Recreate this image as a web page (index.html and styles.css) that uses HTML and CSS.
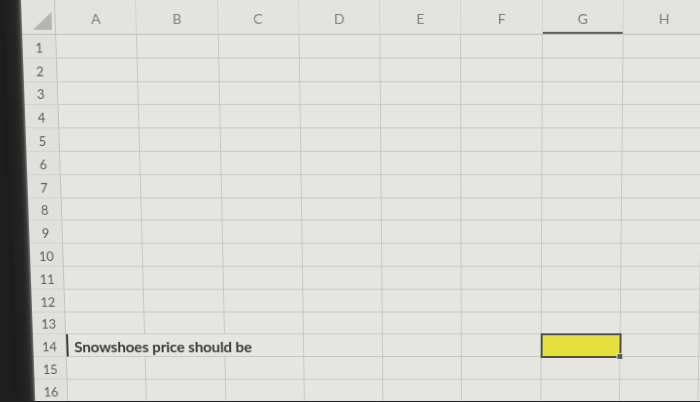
FILE: index.html
```html
<!DOCTYPE html>
<html lang="en">
<head>
<meta charset="utf-8">
<title>Spreadsheet</title>
<link rel="stylesheet" href="styles.css">
</head>
<body>
<div class="screen">
  <div class="bezel"></div>
  <div class="sheet">
    <div class="topband"></div>
    <div class="grid">
      <div class="corner"><svg class="tri" width="20" height="19" viewBox="0 0 20 19"><polygon points="19,0 19,18 0,18" fill="#b4b4b0"/></svg></div>
      <div class="ch">A</div><div class="ch">B</div><div class="ch">C</div><div class="ch">D</div><div class="ch">E</div><div class="ch">F</div><div class="ch ch-sel">G</div><div class="ch">H</div><div class="ch"></div>

      <div class="rh">1</div><div class="c"></div><div class="c"></div><div class="c"></div><div class="c"></div><div class="c"></div><div class="c"></div><div class="c"></div><div class="c"></div><div class="c"></div>
      <div class="rh">2</div><div class="c"></div><div class="c"></div><div class="c"></div><div class="c"></div><div class="c"></div><div class="c"></div><div class="c"></div><div class="c"></div><div class="c"></div>
      <div class="rh">3</div><div class="c"></div><div class="c"></div><div class="c"></div><div class="c"></div><div class="c"></div><div class="c"></div><div class="c"></div><div class="c"></div><div class="c"></div>
      <div class="rh">4</div><div class="c"></div><div class="c"></div><div class="c"></div><div class="c"></div><div class="c"></div><div class="c"></div><div class="c"></div><div class="c"></div><div class="c"></div>
      <div class="rh">5</div><div class="c"></div><div class="c"></div><div class="c"></div><div class="c"></div><div class="c"></div><div class="c"></div><div class="c"></div><div class="c"></div><div class="c"></div>
      <div class="rh">6</div><div class="c"></div><div class="c"></div><div class="c"></div><div class="c"></div><div class="c"></div><div class="c"></div><div class="c"></div><div class="c"></div><div class="c"></div>
      <div class="rh">7</div><div class="c"></div><div class="c"></div><div class="c"></div><div class="c"></div><div class="c"></div><div class="c"></div><div class="c"></div><div class="c"></div><div class="c"></div>
      <div class="rh">8</div><div class="c"></div><div class="c"></div><div class="c"></div><div class="c"></div><div class="c"></div><div class="c"></div><div class="c"></div><div class="c"></div><div class="c"></div>
      <div class="rh">9</div><div class="c"></div><div class="c"></div><div class="c"></div><div class="c"></div><div class="c"></div><div class="c"></div><div class="c"></div><div class="c"></div><div class="c"></div>
      <div class="rh">10</div><div class="c"></div><div class="c"></div><div class="c"></div><div class="c"></div><div class="c"></div><div class="c"></div><div class="c"></div><div class="c"></div><div class="c"></div>
      <div class="rh">11</div><div class="c"></div><div class="c"></div><div class="c"></div><div class="c"></div><div class="c"></div><div class="c"></div><div class="c"></div><div class="c"></div><div class="c"></div>
      <div class="rh">12</div><div class="c"></div><div class="c"></div><div class="c"></div><div class="c"></div><div class="c"></div><div class="c"></div><div class="c"></div><div class="c"></div><div class="c"></div>
      <div class="rh">13</div><div class="c"></div><div class="c"></div><div class="c"></div><div class="c"></div><div class="c"></div><div class="c"></div><div class="c"></div><div class="c"></div><div class="c"></div>
      <div class="rh">14</div><div class="c c-text">Snowshoes price should be</div><div class="c"></div><div class="c"></div><div class="c"></div><div class="c c-sel"></div><div class="c"></div><div class="c"></div>
      <div class="rh">15</div><div class="c"></div><div class="c"></div><div class="c"></div><div class="c"></div><div class="c"></div><div class="c"></div><div class="c"></div><div class="c"></div><div class="c"></div>
      <div class="rh">16</div><div class="c"></div><div class="c"></div><div class="c"></div><div class="c"></div><div class="c"></div><div class="c"></div><div class="c"></div><div class="c"></div><div class="c"></div>
    </div>
  </div>
</div>
</body>
</html>
```

FILE: styles.css
```css
html, body {
  margin: 0;
  padding: 0;
  height: 100%;
}

body {
  background: #1e1e1e;
  overflow: hidden;
  font-family: Lato, "Open Sans", sans-serif;
}

.screen {
  display: flex;
  width: 770px;
  height: 415px;
  overflow: hidden;
  transform-origin: 491px 0;
  transform: perspective(1000px) rotateX(-4.34deg);
}

.bezel {
  flex: none;
  width: 21px;
  background: linear-gradient(90deg, #1b1b1b 0%, #262626 70%, #3a3a39 88%, #7a7a77 100%);
}

.sheet {
  flex: 1;
  display: flex;
  flex-direction: column;
  background: #e5e5e1;
}

.topband {
  height: 3px;
  background: #bcbcb8;
}

.grid {
  display: grid;
  grid-template-columns: 34px repeat(9, 81.3px);
  grid-template-rows: 35px;
  grid-auto-rows: 23.8px;
}

.grid > div {
  box-sizing: border-box;
}

.corner {
  display: flex;
  align-items: flex-end;
  justify-content: flex-end;
  padding: 0 2px 3px 0;
  background: #e2e2de;
  border-right: 1px solid #c4c4c0;
  border-bottom: 1px solid #bdbdb9;
}

.tri {
  display: block;
}

.ch {
  display: flex;
  align-items: center;
  justify-content: center;
  padding-top: 3px;
  background: #e3e3df;
  border-right: 1px solid #d3d3cf;
  border-bottom: 1px solid #bdbdb9;
  color: #7e7e7c;
  font-size: 14px;
}

.ch-sel {
  color: #75817a;
  box-shadow: inset 0 -2px 0 #56615a;
}

.rh {
  display: flex;
  align-items: center;
  justify-content: center;
  padding-top: 3px;
  background: #e0e0dc;
  border-right: 1px solid #c2c2be;
  border-bottom: 1px solid #d2d2ce;
  color: #5c5c5a;
  font-size: 13px;
}

.c {
  border-right: 1px solid #c7c7c3;
  border-bottom: 1px solid #c7c7c3;
  background: #e5e5e1;
}

.c-text {
  grid-column: span 3;
  display: flex;
  align-items: center;
  padding: 2px 0 0 6px;
  border-left: 2px solid #3c3c3c;
  color: #3a3a3a;
  font-size: 15.5px;
  font-weight: 700;
  letter-spacing: -0.15px;
  white-space: nowrap;
}

.c-sel {
  position: relative;
  z-index: 1;
  background: #e4e03e;
  outline: 2px solid #4a4e4a;
  outline-offset: -1px;
}

.c-sel::after {
  content: "";
  position: absolute;
  right: -4px;
  bottom: -4px;
  width: 5px;
  height: 5px;
  background: #4f5d52;
  border: 1px solid #e5e5e1;
}
```
